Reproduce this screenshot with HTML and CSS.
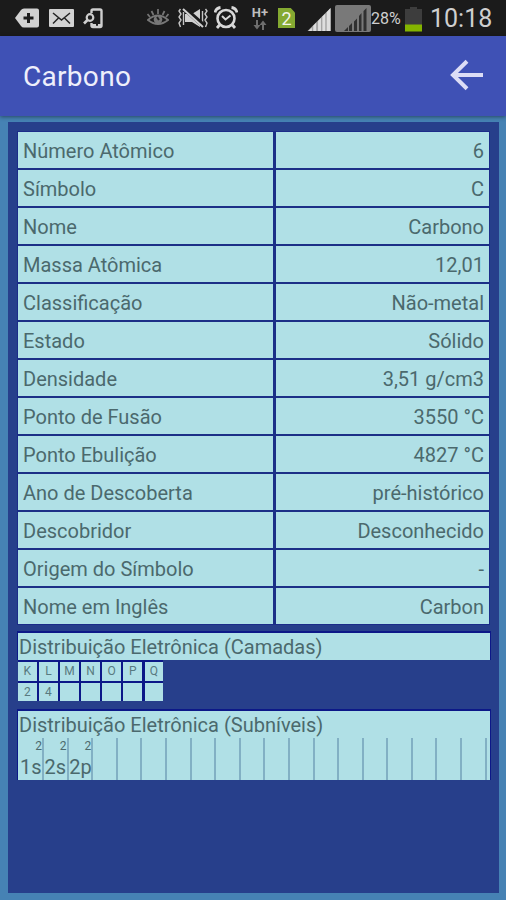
FILE: index.html
```html
<!DOCTYPE html>
<html lang="pt-BR">

<head>
  <meta charset="UTF-8">
  <meta name="viewport" content="width=device-width, initial-scale=1.0">
  <title>Carbono</title>
  <link rel="stylesheet" href="styles.css">
</head>

<body>
  <div class="status-bar">
    <div class="status-left">
      <svg width="25" height="20" viewBox="0 0 25 20">
        <path d="M0 10L6 2Q7 0.500 9 0.500H22Q24 0.500 24 2.500V17.500Q24 19.500 22 19.500H9Q7 19.500 6 18Z" fill="#d2d2d2" />
        <path d="M13.500 5V15M8.500 10H18.500" stroke="#1c1c1c" stroke-width="3" />
      </svg>
      <svg width="25" height="18" viewBox="0 0 25 18">
        <rect width="25" height="18" rx="1" fill="#d2d2d2" />
        <path d="M4 4L12.500 11L21 4M4 14.500L9.500 9M21 14.500L15.500 9" fill="none" stroke="#242424" stroke-width="1.500" />
      </svg>
      <svg width="21" height="21" viewBox="0 0 21 21">
        <path d="M8.500 5V3Q8.500 1.500 10 1.500H17Q18.500 1.500 18.500 3V17.500Q18.500 19 17 19H10Q8.500 19 8.500 17.500V15" fill="none" stroke="#cecece" stroke-width="2.400" />
        <path d="M9 17H13M15 17H18" stroke="#cecece" stroke-width="2" />
        <circle cx="7" cy="9.500" r="3.300" fill="#1c1c1c" stroke="#cecece" stroke-width="2.200" />
        <path d="M4.500 12L1 15.500" stroke="#cecece" stroke-width="2.600" />
      </svg>
    </div>
    <div class="status-right">
      <svg width="22" height="20" viewBox="0 0 22 20">
        <path d="M1 12Q11 3 21 12Q11 20 1 12Z" fill="none" stroke="#777" stroke-width="2" />
        <circle cx="11" cy="11.500" r="4.300" fill="#777" />
        <path d="M10 9L12 12" stroke="#222" stroke-width="2" />
        <path d="M11 1V6M4.500 3L6.500 7M17.500 3L15.500 7M0.500 6L3 9M21.500 6L19 9" stroke="#777" stroke-width="1.700" />
      </svg>
      <svg class="icon-mute" width="30" height="22" viewBox="0 0 30 22">
        <path d="M7 7H14L22 2V20L14 15H7Z" fill="#d0d0d0" />
        <path d="M2.500 2L1 4L3 7L1 10L3 13L1 16L2.500 20M5.500 5V18M27.500 2L29 4L27 7L29 10L27 13L29 16L27.500 20M24.500 4V17" fill="none" stroke="#c6c6c6" stroke-width="1.400" />
        <path d="M7 2L26 19" stroke="#1b1b1b" stroke-width="5" />
        <path d="M5 2L25 20" stroke="#d0d0d0" stroke-width="2" />
      </svg>
      <svg class="icon-alarm" width="24" height="24" viewBox="0 0 24 24">
        <circle cx="12" cy="12.500" r="8.500" fill="none" stroke="#d8d8d8" stroke-width="2.600" />
        <path d="M1 6.500Q2 2 6.500 1.500M17.500 1.500Q22 2 23 6.500M5.500 19L3 22M18.500 19L21 22" fill="none" stroke="#d8d8d8" stroke-width="2.800" />
        <path d="M8 10L11.500 13.500L16.500 9.500" fill="none" stroke="#d8d8d8" stroke-width="2" />
      </svg>
      <div class="network">
        <span>H+</span>
        <svg width="14" height="10" viewBox="0 0 14 10">
          <path d="M4 0V6M10 10V4" stroke="#6e6e6e" stroke-width="2" />
          <path d="M0.500 5H7.500L4 9.500ZM6.500 5H13.500L10 0.500Z" fill="#6e6e6e" />
        </svg>
      </div>
      <div class="sim">2</div>
      <svg class="icon-signal" width="25" height="24" viewBox="0 0 25 25">
        <path d="M0 25L24 1V25Z" fill="#a4a4a4" />
        <path d="M1 25L4.500 21.500V25ZM6 19.500L9 16.500V25H6ZM11 14.500L14 11.500V25H11ZM15.500 10L18.500 7V25H15.500ZM20 5.500L24 1V25H20Z" fill="#dedede" />
      </svg>
      <svg class="icon-signal-off" width="36" height="27" viewBox="0 0 36 27">
        <rect width="36" height="27" rx="2" fill="#797979" />
        <path d="M9 26L13 22V26ZM14 21L17 18V26H14ZM19 16.500L22 13.500V26H19ZM24 11L26.500 8V26H24ZM28.500 6L31.500 3V26H28.500Z" fill="#303030" />
      </svg>
      <span class="percent">28%</span>
      <svg class="icon-battery" width="17" height="25" viewBox="0 0 17 25">
        <path d="M0 2H5V0H12V2H17V18H0Z" fill="#3d3d3d" />
        <rect y="17.500" width="17" height="7" fill="#84b400" />
      </svg>
      <span class="clock">10:18</span>
    </div>
  </div>

  <div class="app-bar">
    <h1>Carbono</h1>
    <svg width="34" height="32" viewBox="0 0 34 32">
      <path d="M17 2.300L3 16L17 29.700M3 16H33" fill="none" stroke="#dcddf6" stroke-width="4" />
    </svg>
  </div>

  <div class="panel">
    <div class="properties">
      <div class="row"><span>Número Atômico</span><span>6</span></div>
      <div class="row"><span>Símbolo</span><span>C</span></div>
      <div class="row"><span>Nome</span><span>Carbono</span></div>
      <div class="row"><span>Massa Atômica</span><span>12,01</span></div>
      <div class="row"><span>Classificação</span><span>Não-metal</span></div>
      <div class="row"><span>Estado</span><span>Sólido</span></div>
      <div class="row"><span>Densidade</span><span>3,51 g/cm3</span></div>
      <div class="row"><span>Ponto de Fusão</span><span>3550 °C</span></div>
      <div class="row"><span>Ponto Ebulição</span><span>4827 °C</span></div>
      <div class="row"><span>Ano de Descoberta</span><span>pré-histórico</span></div>
      <div class="row"><span>Descobridor</span><span>Desconhecido</span></div>
      <div class="row"><span>Origem do Símbolo</span><span>-</span></div>
      <div class="row"><span>Nome em Inglês</span><span>Carbon</span></div>
    </div>

    <div class="shells">
      <h2>Distribuição Eletrônica (Camadas)</h2>
      <div class="shell-grid">
        <span>K</span><span>L</span><span>M</span><span>N</span><span>O</span><span>P</span><span>Q</span>
        <span>2</span><span>4</span><span></span><span></span><span></span><span></span><span></span>
      </div>
    </div>

    <div class="sublevels">
      <h2>Distribuição Eletrônica (Subníveis)</h2>
      <div class="sublevel-grid">
        <div><sup>2</sup><span>1s</span></div>
        <div><sup>2</sup><span>2s</span></div>
        <div><sup>2</sup><span>2p</span></div>
        <div></div>
        <div></div>
        <div></div>
        <div></div>
        <div></div>
        <div></div>
        <div></div>
        <div></div>
        <div></div>
        <div></div>
        <div></div>
        <div></div>
        <div></div>
        <div></div>
        <div></div>
        <div></div>
      </div>
    </div>
  </div>
</body>

</html>
```
FILE: styles.css
```css
* {
  box-sizing: border-box;
}

body {
  margin: 0;
  height: 900px;
  overflow: hidden;
  background: #4682b4;
  font-family: Roboto, sans-serif;
  color: #4b696d;
}

h1,
h2 {
  margin: 0;
  font-weight: 400;
}

svg {
  display: block;
  flex: none;
}

/* Status bar */
.status-bar {
  display: flex;
  justify-content: space-between;
  align-items: center;
  height: 36px;
  padding: 0 14px 0 15px;
  background: #1b1b1b;
}

.status-left {
  display: flex;
  align-items: center;
  gap: 9px;
}

.status-right {
  display: flex;
  align-items: center;
}

.icon-mute {
  margin-left: 9px;
}

.icon-alarm {
  margin-left: 6px;
}

.network {
  display: flex;
  flex-direction: column;
  align-items: center;
  width: 18px;
  margin: 0 0 1px 13px;
  color: #bdbdbd;
  font-size: 13px;
  font-weight: 700;
  line-height: 14px;
}

.sim {
  width: 17px;
  height: 20px;
  margin-left: 9px;
  background: #84a931;
  clip-path: polygon(0 0, 75% 0, 100% 22%, 100% 100%, 0 100%);
  color: #f2f5e8;
  font-size: 18px;
  line-height: 21px;
  text-align: center;
}

.icon-signal {
  margin: 2px 0 0 12px;
}

.icon-signal-off {
  margin-left: 3px;
}

.percent {
  width: 31px;
  color: #cfcfcf;
  font-size: 16px;
}

.icon-battery {
  margin: 2px 0 0 3px;
}

.clock {
  width: 62px;
  margin-left: 8px;
  color: #cfcfcf;
  font-size: 25px;
  white-space: nowrap;
}

/* App bar */
.app-bar {
  display: flex;
  justify-content: space-between;
  align-items: center;
  height: 80px;
  padding: 0 22px 2px 23px;
  background: #3f51b5;
  box-shadow: 0 1px 4px rgba(0, 0, 0, 0.45);
}

.app-bar h1 {
  padding-top: 2px;
  color: #eeeffb;
  font-size: 28px;
  letter-spacing: 0.3px;
}

/* Element data */
.panel {
  height: 771px;
  margin: 6px 7px 0 8px;
  padding: 10px 9px 0 10px;
  background: #273f8b;
}

.properties {
  display: flex;
  flex-direction: column;
  gap: 2px;
  margin-right: 1px;
  background: #1c3087;
  box-shadow: 0 0 0 1px #1c2c89;
}

.row {
  display: grid;
  grid-template-columns: 255px 1fr;
  grid-template-rows: 36px;
  column-gap: 3px;
  font-size: 20px;
  line-height: 38px;
}

.row span {
  padding: 0 5px;
  background: #b0e0e6;
}

.row span:last-child {
  text-align: right;
}

.shells {
  margin-top: 9px;
}

.shells h2,
.sublevels h2 {
  height: 27px;
  padding-left: 1px;
  background: #b0e0e6;
  font-size: 20px;
  line-height: 29px;
}

.shells h2,
.sublevels {
  box-shadow: 0 -1px 0 1px #0c1888;
}

.shell-grid {
  display: grid;
  grid-template-columns: repeat(7, 18.6px);
  gap: 2px 2.5px;
  width: max-content;
  padding-top: 2px;
  background: #0c1888;
}

.shell-grid span {
  height: 18.5px;
  background: #b0e0e6;
  color: #587a80;
  font-size: 12px;
  line-height: 19px;
  text-align: center;
}

.sublevels {
  margin-top: 10px;
  height: 69px;
  background: #b0e0e6;
}

.sublevel-grid {
  display: flex;
  height: 42px;
  padding-left: 1.4px;
}

.sublevel-grid div {
  display: flex;
  flex-direction: column;
  flex: none;
  width: 24.6px;
  padding-left: 0.6px;
  border-right: 2px solid #82b0c4;
  white-space: nowrap;
}

.sublevel-grid sup {
  height: 15px;
  font-size: 12px;
  line-height: 16px;
  text-align: right;
}

.sublevel-grid span {
  font-size: 20px;
  line-height: 28px;
}
```
